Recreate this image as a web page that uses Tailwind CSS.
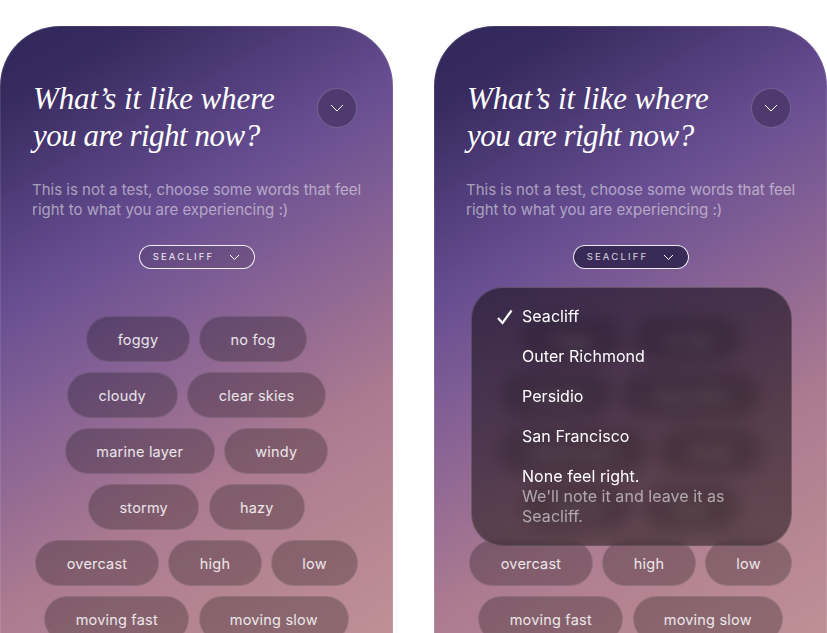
<!DOCTYPE html>
<html lang="en">
<head>
    <meta charset="UTF-8">
    <title>Where you are</title>
    <script src="https://cdn.jsdelivr.net/npm/@tailwindcss/browser@4"></script>
</head>
<body class="bg-white overflow-hidden h-[633px] font-['Inter','Liberation_Sans',sans-serif]">
    <div class="flex gap-[41px] pt-[26px]">
        <!-- closed state -->
        <section class="relative w-[393px] h-[760px] shrink-0 rounded-[60px] border border-white/10 bg-origin-border bg-[linear-gradient(150deg,#30285a_0%,#372a5e_8%,#664d91_28%,#825f95_40%,#ad7b90_60%,#c09096_85%)]">
            <div class="flex items-start justify-between pl-[32px] pr-[35px] pt-[53px]">
                <h1 class="font-['Liberation_Serif',serif] italic text-[31px] leading-[37px] tracking-[-0.1px] text-white">What’s it like where<br><span class="tracking-[-0.5px]">you are right now?</span></h1>
                <button class="mt-[8px] w-[40px] h-[40px] rounded-full bg-[#4f3a70] border border-white/20 flex items-center justify-center">
                    <svg class="w-4 h-4" viewBox="0 0 16 16" fill="none" stroke="white" stroke-width="1"><path d="M2 5l6 6 6-6"/></svg>
                </button>
            </div>
            <p class="mt-[26px] pl-[31px] whitespace-nowrap text-[15px] leading-[20px] text-white/50">This is not a test, choose some words that feel<br>right to what you are experiencing :)</p>
            <div class="mt-[25px] flex justify-center">
                <button class="w-[116px] h-[24px] rounded-full border border-white/90 bg-black/10 flex items-center justify-center gap-[15px] pt-px text-[9.5px] tracking-[2.2px] text-white/90">
                    SEACLIFF
                    <svg class="w-[11px] h-[7px]" viewBox="0 0 11 7" fill="none" stroke="white" stroke-width="1"><path d="M1 1l4.5 4.5L10 1"/></svg>
                </button>
            </div>
            <div class="chips mt-[47px] flex flex-col gap-[10px]"></div>
        </section>

        <!-- dropdown open -->
        <section class="relative w-[393px] h-[760px] shrink-0 rounded-[60px] border border-white/10 bg-origin-border bg-[linear-gradient(150deg,#30285a_0%,#372a5e_8%,#664d91_28%,#825f95_40%,#ad7b90_60%,#c09096_85%)]">
            <div class="flex items-start justify-between pl-[32px] pr-[35px] pt-[53px]">
                <h1 class="font-['Liberation_Serif',serif] italic text-[31px] leading-[37px] tracking-[-0.1px] text-white">What’s it like where<br><span class="tracking-[-0.5px]">you are right now?</span></h1>
                <button class="mt-[8px] w-[40px] h-[40px] rounded-full bg-[#4f3a70] border border-white/20 flex items-center justify-center">
                    <svg class="w-4 h-4" viewBox="0 0 16 16" fill="none" stroke="white" stroke-width="1"><path d="M2 5l6 6 6-6"/></svg>
                </button>
            </div>
            <p class="mt-[26px] pl-[31px] whitespace-nowrap text-[15px] leading-[20px] text-white/50">This is not a test, choose some words that feel<br>right to what you are experiencing :)</p>
            <div class="mt-[25px] flex justify-center">
                <button class="w-[116px] h-[24px] rounded-full border border-white/90 bg-[#392a58] flex items-center justify-center gap-[15px] pt-px text-[9.5px] tracking-[2.2px] text-white/80">
                    SEACLIFF
                    <svg class="w-[11px] h-[7px]" viewBox="0 0 11 7" fill="none" stroke="white" stroke-width="1"><path d="M1 1l4.5 4.5L10 1"/></svg>
                </button>
            </div>
            <div class="chips mt-[47px] flex flex-col gap-[10px]"></div>

            <div class="absolute left-[36px] top-[260px] w-[321px] h-[259px] rounded-[32px] border border-white/15 bg-linear-to-b from-[#1e1424]/65 to-[#2e2024]/60 backdrop-blur-[8px] pl-[50px] pr-6 pt-[18px] text-[16px] tracking-[0.05px] leading-[20px] text-white">
                <svg class="absolute left-[24px] top-[21px] w-[18px] h-[16px]" viewBox="0 0 18 16" fill="none" stroke="white" stroke-width="2.2"><path d="M2 9l4.5 5L15.5 1.5"/></svg>
                <p>Seacliff</p>
                <p class="mt-5">Outer Richmond</p>
                <p class="mt-5">Persidio</p>
                <p class="mt-5">San Francisco</p>
                <p class="mt-5">None feel right.</p>
                <p class="text-white/55">We'll note it and leave it as Seacliff.</p>
            </div>
        </section>
    </div>

    <script>
        const rows = [
            [['foggy', 103.5], ['no fog', 107.5]],
            [['cloudy', 110.5], ['clear skies', 139]],
            [['marine layer', 150], ['windy', 104]],
            [['stormy', 111], ['hazy', 96]],
            [['overcast', 123.5], ['high', 93.5], ['low', 86.5]],
            [['moving fast', 145], ['moving slow', 150]]
        ];

        document.querySelectorAll('.chips').forEach(box => {
            box.innerHTML = rows.map(row => `
                <div class="flex justify-center gap-[9.5px]">
                    ${row.map(([label, width]) => `
                        <span class="h-[46px] pt-[2px] rounded-full border border-white/10 bg-black/25 flex items-center justify-center text-[14.5px] tracking-[0.2px] text-white/85" style="width: ${width}px">${label}</span>
                    `).join('')}
                </div>
            `).join('');
        });
    </script>
</body>
</html>
